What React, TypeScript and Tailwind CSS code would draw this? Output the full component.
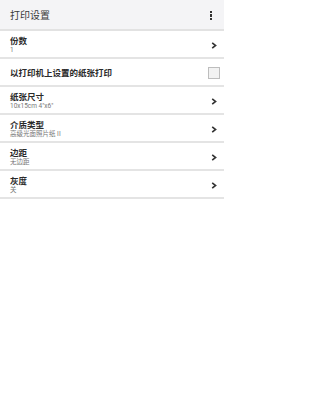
import React from "react";

const font = { fontFamily: 'Roboto, "Noto Sans CJK SC", sans-serif' };

function Chevron() {
  return (
    <svg width="6" height="7" viewBox="0 0 6 7" className="shrink-0">
      <path d="M1.2 0.8 L4.6 3.5 L1.2 6.2" fill="none" stroke="#333" strokeWidth="1.6" strokeLinejoin="miter" />
    </svg>
  );
}

function Row({ title, sub }: { title: string; sub: string }) {
  return (
    <div className="flex h-[28px] items-center justify-between border-b-2 border-[#e4e4e4] pl-[10px] pr-[7px]">
      <div className="flex flex-col pt-[4px]">
        <div className="text-[8.5px] leading-[9px] font-bold text-[#2a2a2a]">{title}</div>
        <div className="text-[6.5px] leading-[9px] text-[#777]">{sub}</div>
      </div>
      <div className="pt-[2px]">
        <Chevron />
      </div>
    </div>
  );
}

export default function App() {
  return (
    <div className="w-[224px] min-h-[400px] bg-white" style={font}>
      <div className="flex h-[31px] items-center justify-between border-b-2 border-[#e2e2e2] bg-[#f4f4f6] pl-[10px] pr-[12px] pt-[2px]">
        <div className="text-[10px] leading-[12px] text-[#3a3a3a]">打印设置</div>
        <div className="flex flex-col gap-[1px]">
          <div className="h-[2.4px] w-[2.4px] bg-[#333]" />
          <div className="h-[2.4px] w-[2.4px] bg-[#333]" />
          <div className="h-[2.4px] w-[2.4px] bg-[#333]" />
        </div>
      </div>
      <Row title="份数" sub="1" />
      <div className="flex h-[28px] items-center justify-between border-b-2 border-[#e4e4e4] pl-[10px] pr-[4px] pt-[2px]">
        <div className="text-[8.5px] leading-[10px] font-bold text-[#2a2a2a]">以打印机上设置的纸张打印</div>
        <div className="h-[12px] w-[12px] border border-[#bdbdbd] bg-[#f2f2f2]" />
      </div>
      <Row title="纸张尺寸" sub={'10x15cm 4"x6"'} />
      <Row title="介质类型" sub="高级光面照片纸 II" />
      <Row title="边距" sub="无边距" />
      <Row title="灰度" sub="关" />
    </div>
  );
}
